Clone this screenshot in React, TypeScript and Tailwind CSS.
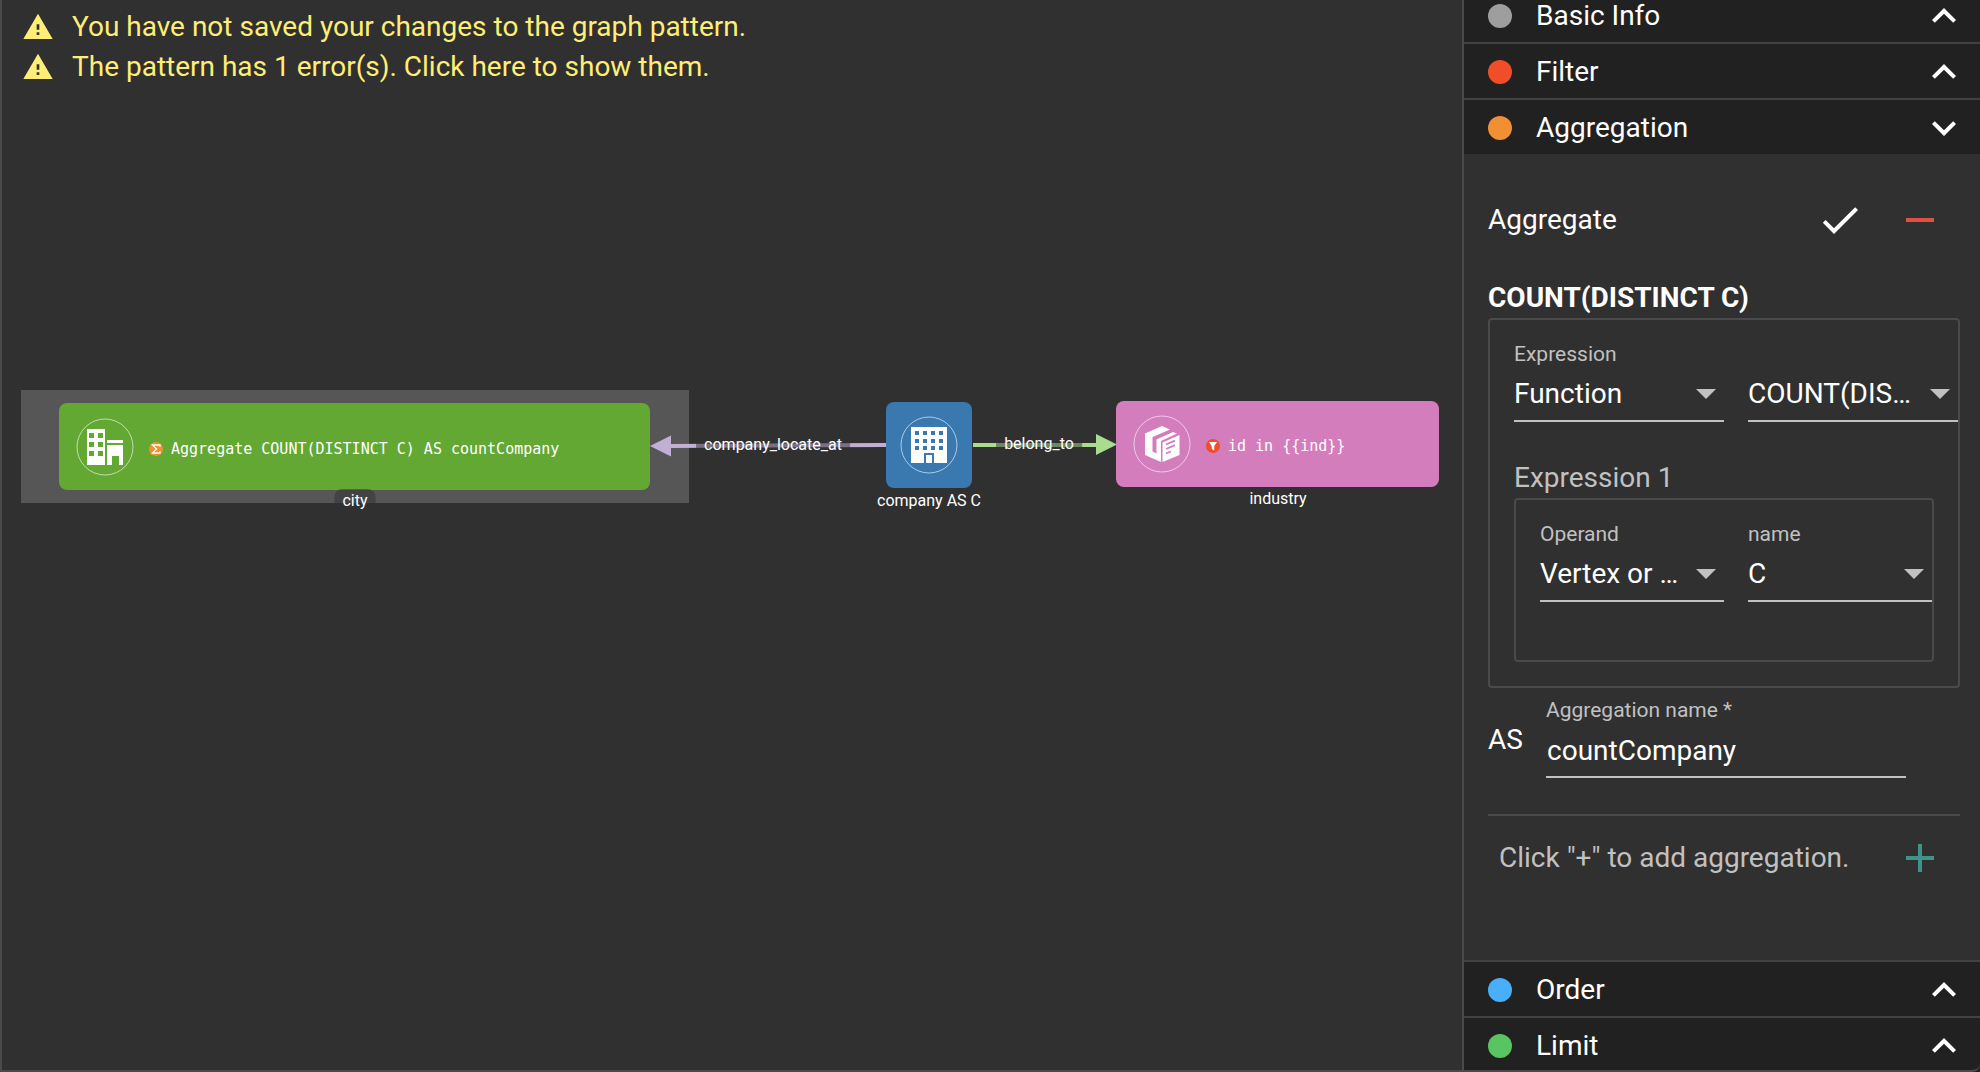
import { useState, type ReactNode } from 'react';

const icons = {
  up: 'M12 8l-6 6 1.41 1.41L12 10.83l4.59 4.58L18 14z',
  down: 'M16.59 8.59L12 13.17 7.41 8.59 6 10l6 6 6-6z',
  check: 'M9 16.17L4.83 12l-1.42 1.41L9 19 21 7l-1.41-1.41z',
  remove: 'M19 13H5v-2h14v2z',
  add: 'M19 13h-6v6h-2v-6H5v-2h6V5h2v6h6v2z',
  warning: 'M1 21h22L12 2 1 21zm12-3h-2v-2h2v2zm0-4h-2v-4h2v4z',
};

function Icon({ name, className = 'size-12' }: { name: keyof typeof icons; className?: string }) {
  return (
    <svg viewBox="0 0 24 24" fill="currentColor" aria-hidden="true" className={`shrink-0 ${className}`}>
      <path d={icons[name]} />
    </svg>
  );
}

function Header({ title, dot, open = false, onToggle }: { title: string; dot: string; open?: boolean; onToggle?: () => void }) {
  return (
    <h2 className="shrink-0">
      <button
        type="button"
        aria-expanded={open}
        onClick={onToggle}
        className="flex h-[54px] w-full items-center bg-[#212121] pt-0.5 pr-3 pl-6 text-left leading-8"
      >
        <span className={`size-6 rounded-full ${dot}`} />
        <span className="ml-6 flex-1">{title}</span>
        <Icon name={open ? 'down' : 'up'} />
      </button>
    </h2>
  );
}

function Select({ id, label, options, ariaLabel }: { id: string; label: string; options: string[]; ariaLabel?: string }) {
  return (
    <div className="min-w-0 flex-1">
      <label htmlFor={id} className="block h-7 text-[21px] leading-7 text-[#c1c1c1]">
        {label}
      </label>
      <div className="grid items-center border-b-2 border-[#c1c1c1] py-1.5">
        <select
          id={id}
          aria-label={ariaLabel}
          className="col-start-1 row-start-1 h-10 w-full appearance-none truncate bg-[#303030] pr-11 outline-none"
        >
          {options.map((o) => (
            <option key={o}>{o}</option>
          ))}
        </select>
        <svg viewBox="0 0 20 10" aria-hidden="true" className="pointer-events-none col-start-1 row-start-1 mr-2 h-2.5 w-5 justify-self-end fill-[#c1c1c1]">
          <path d="M0 0h20L10 10z" />
        </svg>
      </div>
    </div>
  );
}

function NodeLabel({ className, children }: { className: string; children: ReactNode }) {
  return (
    <span className={`absolute -translate-x-1/2 rounded-lg bg-[#303030]/50 px-2 text-base leading-6 whitespace-nowrap ${className}`}>
      {children}
    </span>
  );
}

function NodeRule({ badge, text }: { badge: ReactNode; text: string }) {
  return (
    <div className="ml-[15px] flex items-center gap-2 pt-1">
      <svg viewBox="0 0 14 14" className="size-3.5" aria-hidden="true">
        {badge}
      </svg>
      <span className="font-['DejaVu_Sans_Mono',monospace] text-[15px] leading-5 whitespace-nowrap">{text}</span>
    </div>
  );
}

function Graph() {
  return (
    <div className="absolute inset-0">
      <div className="absolute top-[390px] left-[19px] h-[113px] w-[668px] bg-[#565656]" />
      <svg className="absolute inset-0 h-full w-full" aria-hidden="true">
        <path d="M884 445L668 446" stroke="#c1afd5" strokeWidth="4" />
        <path d="M648 446l21-10.500v21z" fill="#c1afd5" />
        <path d="M971 445h124" stroke="#a8dc8f" strokeWidth="4" />
        <path d="M1115 444.500l-21-10.500v21z" fill="#a8dc8f" />
      </svg>
      <NodeLabel className="top-[433px] left-[771px]">company_locate_at</NodeLabel>
      <NodeLabel className="top-[432px] left-[1037px]">belong_to</NodeLabel>

      <div className="absolute top-[403px] left-[57px] flex h-[87px] w-[591px] items-center rounded-lg bg-[#62a833] pl-[17px]">
        <svg viewBox="0 0 58 58" className="size-[58px]" aria-hidden="true">
          <circle cx="29" cy="29" r="28" fill="none" stroke="#fff" strokeOpacity=".6" />
          <path
            fill="#fff"
            fillRule="evenodd"
            d="M11 11h18v36H11zM13 15v5h5v-5zM22 15v5h5v-5zM13 24v5h5v-5zM22 24v5h5v-5zM13 33v5h5v-5zM22 33v5h5v-5zM31 22h16v3H31zM31 27h16v20h-4v-9h-7v9h-5z"
          />
        </svg>
        <NodeRule
          text="Aggregate COUNT(DISTINCT C) AS countCompany"
          badge={
            <>
              <circle cx="7" cy="7" r="7" fill="#f09033" />
              <path d="M11 4.800V3H3.500l4 4-4 4H11V9.200" fill="none" stroke="#fff" strokeWidth="1.300" />
            </>
          }
        />
      </div>
      <NodeLabel className="top-[489px] left-[353px]">city</NodeLabel>

      <div className="absolute top-[402px] left-[884px] flex size-[86px] items-center justify-center rounded-lg bg-[#3a78b0]">
        <svg viewBox="0 0 58 58" className="size-[58px]" aria-hidden="true">
          <circle cx="29" cy="29" r="28" fill="none" stroke="#fff" strokeOpacity=".6" />
          <path
            fill="#fff"
            fillRule="evenodd"
            d="M11 11h36v36H34V37H24v10H11zM15 15v4h4v-4zM23 15v4h4v-4zM31 15v4h4v-4zM39 15v4h4v-4zM15 23v4h4v-4zM23 23v4h4v-4zM31 23v4h4v-4zM39 23v4h4v-4zM15 30v4h4v-4zM23 30v4h4v-4zM31 30v4h4v-4zM39 30v4h4v-4zM26 39h6v8h-6z"
          />
        </svg>
      </div>
      <NodeLabel className="top-[489px] left-[927px]">company AS C</NodeLabel>

      <div className="absolute top-[401px] left-[1114px] flex h-[86px] w-[323px] items-center rounded-lg bg-[#d47dbd] pl-[17px]">
        <svg viewBox="0 0 58 58" className="size-[58px]" aria-hidden="true">
          <circle cx="29" cy="29" r="28" fill="none" stroke="#fff" strokeOpacity=".6" />
          <path fill="#fff" d="M12 18.500L29 11l8 3.500L19.500 22v14.500l4 2V24.500L40 17l4 1.500L28 26v21L12 40z" />
          <path fill="#fff" d="M29.500 27.500L46.500 20v20l-17 7z" />
          <path d="M33 29.500l9-3.800M33 34l9-3.800M33 38.500l5-2" stroke="#d47dbd" strokeWidth="1.800" />
        </svg>
        <NodeRule
          text="id in {{ind}}"
          badge={
            <>
              <circle cx="7" cy="7" r="7" fill="#f04e28" />
              <path d="M3 3h8L8.300 7v4.500l-2.600-1.500V7z" fill="#fff" />
            </>
          }
        />
      </div>
      <NodeLabel className="top-[487px] left-[1276px]">industry</NodeLabel>
    </div>
  );
}

export default function App() {
  const [open, setOpen] = useState(true);
  return (
    <div className="relative flex min-h-screen overflow-hidden bg-[#303030] font-['Roboto',sans-serif] text-[28px] leading-10 text-white after:pointer-events-none after:absolute after:inset-0 after:rounded-br-lg after:border-b-2 after:border-[#4a4a4a]">
      <main className="relative min-w-0 flex-1 border-l-2 border-[#4a4a4a]">
        <Graph />
        <div className="relative flex flex-col items-start pt-[7px] pl-5 text-[#ffee75]">
          <p className="flex items-center gap-[18px]">
            <Icon name="warning" className="size-8" />
            You have not saved your changes to the graph pattern.
          </p>
          <button type="button" className="flex items-center gap-[18px]">
            <Icon name="warning" className="size-8" />
            The pattern has 1 error(s). Click here to show them.
          </button>
        </div>
      </main>

      <aside className="-mt-3 flex w-[518px] shrink-0 flex-col border-l-2 border-[#4a4a4a]">
        <div className="flex flex-1 flex-col divide-y-2 divide-[#424242]">
          <Header title="Basic Info" dot="bg-[#9e9e9e]" />
          <Header title="Filter" dot="bg-[#f04e28]" />
          <section className="flex flex-1 flex-col">
            <Header title="Aggregation" dot="bg-[#f09033]" open={open} onToggle={() => setOpen(!open)} />
            {open && (
              <div className="flex-1 pt-[26px] pr-5 pl-6">
                <div className="flex items-center">
                  <span className="flex-1">Aggregate</span>
                  <button type="button" aria-label="Confirm" className="flex size-20 items-center justify-center">
                    <Icon name="check" />
                  </button>
                  <button type="button" aria-label="Remove" className="flex size-20 items-center justify-center text-[#df5041]">
                    <Icon name="remove" />
                  </button>
                </div>
                <h3 className="mt-[18px] font-bold">COUNT(DISTINCT C)</h3>
                <div className="rounded border-2 border-[#4a4a4a] pt-5 pb-6 pl-6">
                  <div className="flex gap-6">
                    <Select id="expression" label="Expression" options={['Function', 'Attribute']} />
                    <Select id="function" label="" ariaLabel="Function" options={['COUNT(DISTINCT)', 'COUNT']} />
                  </div>
                  <h4 className="mt-9 text-[#c1c1c1]">Expression 1</h4>
                  <div className="mr-6 rounded border-2 border-[#4a4a4a] pt-5 pb-[58px] pl-6">
                    <div className="flex gap-6">
                      <Select id="operand" label="Operand" options={['Vertex or edge', 'Attribute']} />
                      <Select id="name" label="name" options={['C']} />
                    </div>
                  </div>
                </div>
                <div className="flex pt-2">
                  <label htmlFor="aggregation-name" className="w-[58px] pt-6">
                    AS
                  </label>
                  <div className="w-[360px]">
                    <label htmlFor="aggregation-name" className="block text-[21px] leading-7 text-[#c1c1c1]">
                      Aggregation name *
                    </label>
                    <input
                      id="aggregation-name"
                      required
                      defaultValue="countCompany"
                      className="block h-[54px] w-full border-b-2 border-[#c1c1c1] bg-transparent py-1.5 pl-px outline-none"
                    />
                  </div>
                </div>
                <div className="mt-9 flex items-center border-t-2 border-[#4a4a4a] pt-0.5 pl-[11px]">
                  <span className="flex-1 text-[#c1c1c1]">Click "+" to add aggregation.</span>
                  <button type="button" aria-label="Add aggregation" className="flex size-20 items-center justify-center text-[#3e9488]">
                    <Icon name="add" />
                  </button>
                </div>
              </div>
            )}
          </section>
          <Header title="Order" dot="bg-[#4aaefb]" />
          <Header title="Limit" dot="bg-[#5ac463]" />
        </div>
      </aside>
    </div>
  );
}
